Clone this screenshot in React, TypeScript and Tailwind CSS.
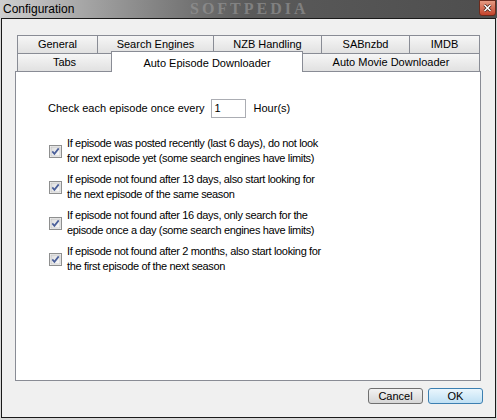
import React from 'react';

const font = { fontFamily: '"Liberation Sans", Arial, sans-serif' };

const rowOne = [
  { label: 'General', w: 'w-[80px] border-l' },
  { label: 'Search Engines', w: 'w-[116px] border-l' },
  { label: 'NZB Handling', w: 'w-[108px] border-l' },
  { label: 'SABnzbd', w: 'w-[88px] border-l' },
  { label: 'IMDB', w: 'w-[71px] border-l border-r' },
];

const options = [
  [
    'If episode was posted recently (last 6 days), do not look',
    'for next episode yet (some search engines have limits)',
  ],
  [
    'If episode not found after 13 days, also start looking for',
    'the next episode of the same season',
  ],
  [
    'If episode not found after 16 days, only search for the',
    'episode once a day (some search engines have limits)',
  ],
  [
    'If episode not found after 2 months, also start looking for',
    'the first episode of the next season',
  ],
];

const tabClass =
  'h-[18px] flex items-center justify-center border-t border-[#898c95] bg-gradient-to-b from-[#f6f6f6] to-[#e1e1e1] text-[11px] text-black';

const Checkbox = () => (
  <svg width="13" height="13" viewBox="0 0 13 13" className="shrink-0">
    <defs>
      <linearGradient id="cb" x1="0" y1="0" x2="1" y2="1">
        <stop offset="0" stopColor="#dcdcdc" />
        <stop offset="1" stopColor="#fbfbfb" />
      </linearGradient>
    </defs>
    <rect x="0.5" y="0.5" width="12" height="12" fill="#f4f4f4" stroke="#8e8f8f" />
    <rect x="2" y="2" width="9" height="9" fill="url(#cb)" stroke="#b8b8b8" strokeWidth="0.6" />
    <path d="M3.3 6.4 L5.4 8.8 L9.7 3.4" fill="none" stroke="#4a5f9a" strokeWidth="1.7" />
  </svg>
);

const App: React.FC = () => {
  return (
    <div className="w-[497px] h-[420px] bg-[#d8d8d8] flex flex-col overflow-hidden" style={font}>
      {/* title bar */}
      <div className="relative h-[18px] flex items-center justify-between overflow-hidden bg-gradient-to-r from-[#cfcfcf] via-[#5a5a5a] to-[#4e4e4e]">
        <span className="pl-[3px] text-[12px] text-black relative z-10">Configuration</span>
        <span
          className="absolute left-[190px] top-[1px] text-[16px] leading-[16px] font-bold tracking-[3px] text-[#9a9a9a] opacity-60"
          style={{ fontFamily: '"Liberation Serif", serif' }}
        >
          SOFTPEDIA
        </span>
        <div className="relative z-10 mr-[1px] w-[17px] h-[16px] self-start rounded-b-[3px] border border-[#6b2a1c] bg-gradient-to-b from-[#e59a82] to-[#c4412a] flex items-center justify-center">
          <svg width="9" height="8" viewBox="0 0 9 8">
            <path d="M1.5 1 L7.5 7 M7.5 1 L1.5 7" stroke="#3b1a12" strokeWidth="3" />
            <path d="M1.5 1 L7.5 7 M7.5 1 L1.5 7" stroke="#ffffff" strokeWidth="1.6" />
          </svg>
        </div>
      </div>

      {/* window body */}
      <div className="ml-[1px] w-[495px] h-[400px] border border-[#1a1a1a] bg-[#f0f0f0] flex flex-col px-[13px] pt-[16px]">
        <div className="pl-[2px] flex flex-col">
          <div className="flex">
            {rowOne.map((t) => (
              <div key={t.label} className={`${tabClass} ${t.w}`}>
                {t.label}
              </div>
            ))}
          </div>
          <div className="flex items-end">
            <div className={`${tabClass} w-[94px] border-l`}>Tabs</div>
            <div className="relative z-10 -mb-px w-[192px] h-[21px] -mt-[2px] flex items-start pt-[3px] justify-center border-t border-l border-r border-[#898c95] bg-white text-[11px] text-black">
              Auto Episode Downloader
            </div>
            <div className={`${tabClass} w-[177px] border-r`}>Auto Movie Downloader</div>
          </div>
        </div>

        {/* panel */}
        <div className="w-[466px] h-[310px] border border-[#898c95] bg-white pl-[32px] pt-[27px] text-[11px] text-black">
          <div className="flex items-center">
            <span>Check each episode once every</span>
            <div className="ml-[6px] w-[35px] h-[19px] border border-[#abadb3] bg-white flex items-center pl-[3px]">
              1
            </div>
            <span className="ml-[8px]">Hour(s)</span>
          </div>

          <div className="mt-[18px] flex flex-col gap-[6px]">
            {options.map((lines) => (
              <div key={lines[0]} className="flex items-center">
                <div className="ml-[1px] w-[18px]">
                  <Checkbox />
                </div>
                <div className="leading-[15px] whitespace-nowrap tracking-[-0.35px]">
                  {lines[0]}
                  <br />
                  {lines[1]}
                </div>
              </div>
            ))}
          </div>
        </div>

        {/* buttons */}
        <div className="mt-[7px] -mr-[1px] flex justify-end gap-[5px]">
          <button
            type="button"
            className="w-[55px] h-[16px] rounded-[3px] border border-[#707070] bg-gradient-to-b from-[#f2f2f2] to-[#d6d6d6] text-[11px] leading-none text-black flex items-center justify-center"
          >
            Cancel
          </button>
          <button
            type="button"
            className="w-[55px] h-[16px] rounded-[3px] border border-[#3c7fb1] bg-gradient-to-b from-[#eaf6fd] to-[#bfe0f4] text-[11px] leading-none text-black flex items-center justify-center"
          >
            OK
          </button>
        </div>
      </div>
    </div>
  );
};

export default App;
